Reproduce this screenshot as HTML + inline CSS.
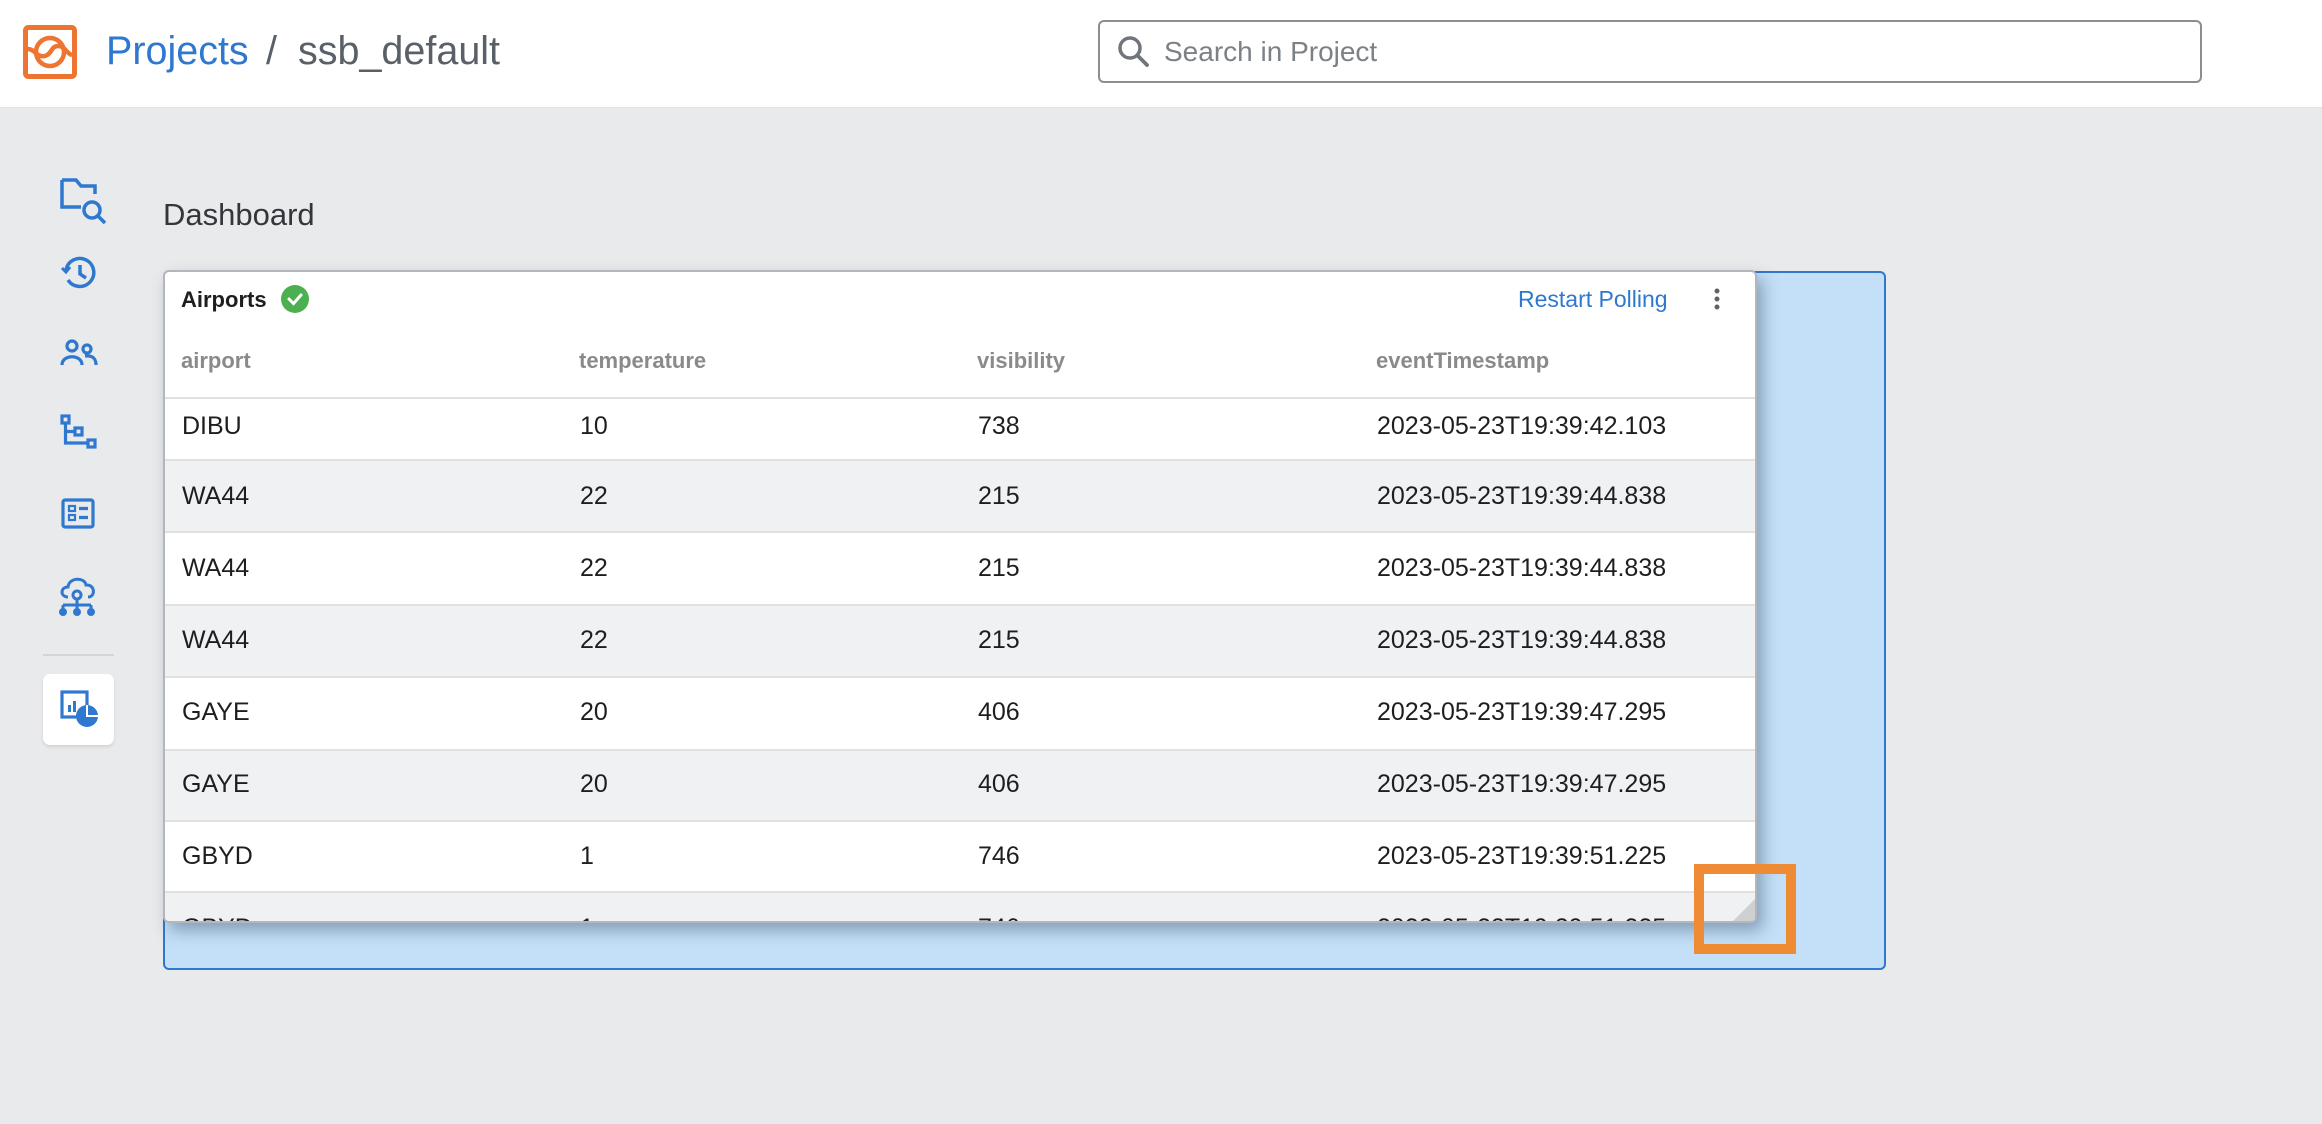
<!DOCTYPE html>
<html><head><meta charset="utf-8"><style>
*{margin:0;padding:0;box-sizing:border-box}
body{width:2322px;height:1124px;background:#e9eaec;font-family:"Liberation Sans",sans-serif;position:relative;overflow:hidden}
.abs{position:absolute}
#hdr{left:0;top:0;width:2322px;height:108px;background:#fff;border-bottom:1px solid #e2e3e5}
.t{position:absolute;white-space:nowrap}
.cell{position:absolute;font-size:25px;color:#1e1e1e;white-space:nowrap}
.hd{position:absolute;font-size:22px;color:#8a8a8a;font-weight:bold;white-space:nowrap}
.row{position:absolute;left:0;width:1592px;border-top:2px solid #e0e1e3}
</style></head><body>
<div id="hdr" class="abs">
  <svg class="abs" style="left:23px;top:25px" width="54" height="54" viewBox="0 0 54 54">
    <rect x="2.5" y="2.5" width="49" height="49" rx="3" fill="none" stroke="#ee7432" stroke-width="5"/>
    <circle cx="27" cy="27" r="14" fill="none" stroke="#ee7432" stroke-width="4.5"/>
    <path d="M5 24 C12 24 14 33 22 31 C29 29 28 21 35 21 C42 21 44 29 49 30" fill="none" stroke="#ee7432" stroke-width="4.5"/>
  </svg>
  <div class="t" style="left:106px;top:29px;font-size:39.5px;color:#2f78d0">Projects</div>
  <div class="t" style="left:266px;top:29px;font-size:39.5px;color:#5a6068">/</div>
  <div class="t" style="left:298px;top:29px;font-size:39.5px;color:#5a6068">ssb_default</div>
  <div class="abs" style="left:1098px;top:20px;width:1104px;height:63px;border:2px solid #8a8e93;border-radius:6px;background:#fff"></div>
  <svg class="abs" style="left:1117px;top:35px" width="34" height="34" viewBox="0 0 34 34"><circle cx="13" cy="13" r="10" fill="none" stroke="#70757b" stroke-width="3.5"/><path d="M20.5 20.5 L30 30" stroke="#70757b" stroke-width="3.8" stroke-linecap="round"/></svg>
  <div class="t" style="left:1164px;top:36px;font-size:28px;color:#7c8186">Search in Project</div>
</div>

<!-- sidebar -->
<svg class="abs" style="left:58px;top:176px" width="50" height="52" viewBox="0 0 50 52" fill="none" stroke="#2f78d0" stroke-width="3.5"><path d="M4 4 H18 L23 10 H37 V18 M4 4 V31 H23"/><circle cx="34" cy="34" r="8"/><path d="M40 40 L47 47"/></svg>
<svg class="abs" style="left:60px;top:256px" width="40" height="36" viewBox="0 0 40 36" fill="none" stroke="#2f78d0" stroke-width="3.5"><path d="M6 14 A14 14 0 1 1 8 24"/><path d="M2 12 L6 16 L10 11" stroke-width="3"/><path d="M20 9 V18 L26 22"/></svg>
<svg class="abs" style="left:60px;top:338px" width="40" height="30" viewBox="0 0 40 30" fill="none" stroke="#2f78d0" stroke-width="3.2"><circle cx="12" cy="8" r="5"/><path d="M2 27 C2 16 22 16 22 27"/><circle cx="27" cy="11" r="4"/><path d="M25 18 C33 17 36 21 36 27"/></svg>
<svg class="abs" style="left:60px;top:414px" width="40" height="36" viewBox="0 0 40 36" fill="none" stroke="#2f78d0" stroke-width="3.2"><rect x="2" y="2" width="7" height="7"/><rect x="15" y="14" width="7" height="7"/><rect x="28" y="26" width="7" height="7"/><path d="M5.5 9 V29 H28 M5.5 17.5 H15"/></svg>
<svg class="abs" style="left:61px;top:498px" width="36" height="32" viewBox="0 0 36 32" fill="none" stroke="#2f78d0" stroke-width="3.2"><rect x="2" y="2" width="30" height="27" rx="2"/><rect x="8" y="8" width="6" height="5" stroke-width="2.2"/><rect x="8" y="17" width="6" height="5" stroke-width="2.2"/><path d="M18 10.5 H27 M18 19.5 H27"/></svg>
<svg class="abs" style="left:58px;top:575px" width="42" height="42" viewBox="0 0 42 42" fill="none" stroke="#2f78d0" stroke-width="3"><path d="M10 22 C2 22 2 12 10 12 C11 2 27 2 28 10 C37 9 38 22 30 22"/><circle cx="19" cy="20" r="4"/><path d="M19 24 V36 M5 30 H33 M5 30 V36 M33 30 V36"/><circle cx="5" cy="37" r="2.5" fill="#2f78d0"/><circle cx="19" cy="37" r="2.5" fill="#2f78d0"/><circle cx="33" cy="37" r="2.5" fill="#2f78d0"/></svg>
<div class="abs" style="left:43px;top:654px;width:71px;height:2px;background:#d2d4d7"></div>
<div class="abs" style="left:43px;top:674px;width:71px;height:71px;background:#fff;border-radius:7px;box-shadow:0 2px 3px rgba(0,0,0,.1)"></div>
<svg class="abs" style="left:60px;top:690px" width="40" height="38" viewBox="0 0 40 38"><rect x="2" y="2" width="25" height="25" fill="none" stroke="#2f78d0" stroke-width="3.2"/><rect x="8" y="15" width="3" height="7" fill="#2f78d0"/><rect x="13" y="11" width="3" height="11" fill="#2f78d0"/><circle cx="27" cy="26" r="11" fill="#2f78d0"/><path d="M27 15 V26 H38" stroke="#fff" stroke-width="2" fill="none"/></svg>

<div class="t" style="left:163px;top:197px;font-size:31px;color:#33363a">Dashboard</div>

<div class="abs" style="left:163px;top:271px;width:1723px;height:699px;background:#c4e0f8;border:2px solid #2f78d0;border-radius:6px"></div>

<div class="abs" style="left:163px;top:270px;width:1594px;height:653px;background:#fff;border:2px solid #b3b6ba;border-radius:6px;box-shadow:6px 8px 16px rgba(60,80,110,.45);overflow:hidden">
  <div class="t" style="left:16px;top:15px;font-size:22px;font-weight:bold;color:#1e1e1e">Airports</div>
  <svg class="abs" style="left:115px;top:12px" width="30" height="30" viewBox="0 0 30 30"><circle cx="15" cy="15" r="14" fill="#4caf50"/><path d="M9 15 L13.5 19.5 L21 11" stroke="#fff" stroke-width="3" fill="none" stroke-linecap="round"/></svg>
  <div class="t" style="left:1353px;top:14px;font-size:23px;color:#2f78d0">Restart Polling</div>
  <svg class="abs" style="left:1548px;top:16px" width="8" height="22" viewBox="0 0 8 22"><circle cx="4" cy="3" r="2.5" fill="#5f6368"/><circle cx="4" cy="11" r="2.5" fill="#5f6368"/><circle cx="4" cy="19" r="2.5" fill="#5f6368"/></svg>
  <div class="hd" style="left:16px;top:76px">airport</div>
  <div class="hd" style="left:414px;top:76px">temperature</div>
  <div class="hd" style="left:812px;top:76px">visibility</div>
  <div class="hd" style="left:1211px;top:76px">eventTimestamp</div>

  <div class="row" style="top:125px;height:62px;background:#fff"></div>
  <div class="row" style="top:187px;height:72px;background:#f0f1f3"></div>
  <div class="row" style="top:259px;height:73px;background:#fff"></div>
  <div class="row" style="top:332px;height:72px;background:#f0f1f3"></div>
  <div class="row" style="top:404px;height:73px;background:#fff"></div>
  <div class="row" style="top:477px;height:71px;background:#f0f1f3"></div>
  <div class="row" style="top:548px;height:71px;background:#fff"></div>
  <div class="row" style="top:619px;height:40px;background:#f0f1f3"></div>

  <div class="cell" style="left:17px;top:140px">DIBU</div><div class="cell" style="left:415px;top:140px">10</div><div class="cell" style="left:813px;top:140px">738</div><div class="cell" style="left:1212px;top:140px">2023-05-23T19:39:42.103</div>
  <div class="cell" style="left:17px;top:210px">WA44</div><div class="cell" style="left:415px;top:210px">22</div><div class="cell" style="left:813px;top:210px">215</div><div class="cell" style="left:1212px;top:210px">2023-05-23T19:39:44.838</div>
  <div class="cell" style="left:17px;top:282px">WA44</div><div class="cell" style="left:415px;top:282px">22</div><div class="cell" style="left:813px;top:282px">215</div><div class="cell" style="left:1212px;top:282px">2023-05-23T19:39:44.838</div>
  <div class="cell" style="left:17px;top:354px">WA44</div><div class="cell" style="left:415px;top:354px">22</div><div class="cell" style="left:813px;top:354px">215</div><div class="cell" style="left:1212px;top:354px">2023-05-23T19:39:44.838</div>
  <div class="cell" style="left:17px;top:426px">GAYE</div><div class="cell" style="left:415px;top:426px">20</div><div class="cell" style="left:813px;top:426px">406</div><div class="cell" style="left:1212px;top:426px">2023-05-23T19:39:47.295</div>
  <div class="cell" style="left:17px;top:498px">GAYE</div><div class="cell" style="left:415px;top:498px">20</div><div class="cell" style="left:813px;top:498px">406</div><div class="cell" style="left:1212px;top:498px">2023-05-23T19:39:47.295</div>
  <div class="cell" style="left:17px;top:570px">GBYD</div><div class="cell" style="left:415px;top:570px">1</div><div class="cell" style="left:813px;top:570px">746</div><div class="cell" style="left:1212px;top:570px">2023-05-23T19:39:51.225</div>
  <div class="cell" style="left:17px;top:642px">GBYD</div><div class="cell" style="left:415px;top:642px">1</div><div class="cell" style="left:813px;top:642px">746</div><div class="cell" style="left:1212px;top:642px">2023-05-23T19:39:51.225</div>
  <svg class="abs" style="left:1568px;top:627px" width="22" height="22" viewBox="0 0 22 22"><path d="M22 0 V22 H0 Z" fill="#cfd0d2"/></svg>
</div>

<div class="abs" style="left:1694px;top:864px;width:102px;height:90px;border:10px solid #ef8a35"></div>
</body></html>
